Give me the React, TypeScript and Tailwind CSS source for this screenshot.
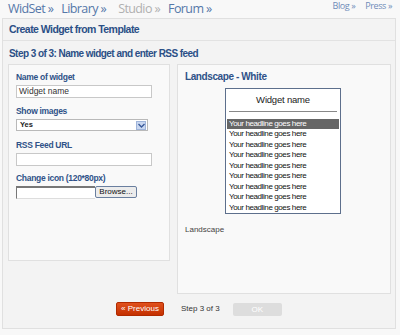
import React from "react";

const rows = Array.from({ length: 9 });

export default function App() {
  return (
    <div className="w-[400px] h-[335px] bg-[#f8f8f8] overflow-hidden" style={{ fontFamily: "'Liberation Sans', Arial, sans-serif" }}>
      {/* top nav */}
      <div className="h-[17px] flex items-end pl-[8px] pr-[8px] text-[12.5px] leading-[16px] tracking-[-0.6px]" style={{ fontFamily: "'Open Sans', sans-serif" }}>
        <span className="text-[#5577a8] mr-[8px]">WidSet »</span>
        <span className="text-[#5577a8] mr-[12px]">Library »</span>
        <span className="text-[#b0b0b0] mr-[8px]">Studio »</span>
        <span className="text-[#5577a8]">Forum »</span>
        <div className="flex-1" />
        <span className="text-[9px] text-[#6f8cb8] mb-[3px] mr-[10px] tracking-[-0.4px]">Blog »</span>
        <span className="text-[9px] text-[#6f8cb8] mb-[3px] tracking-[-0.4px]">Press »</span>
      </div>
      {/* main box */}
      <div className="ml-[2px] mt-[1px] w-[394px] h-[311px] border border-[#e0e0e0] bg-[#f3f3f3] flex flex-col">
        <div className="h-[22px] border-b border-[#e2e2e2] flex items-center pl-[6px] pt-[1px] text-[10.5px] font-bold text-[#2b4f86] tracking-[-0.55px]">
          Create Widget from Template
        </div>
        <div className="h-[23px] flex items-center pl-[6px] pt-[1px] text-[10px] font-bold text-[#2b4f86] tracking-[-0.55px]">
          Step 3 of 3: Name widget and enter RSS feed
        </div>
        <div className="flex items-start gap-[7px] pl-[5px]">
          {/* left panel */}
          <div className="w-[162px] h-[197px] border border-[#e0e0e0] bg-[#f9f9f9] pl-[7px] pt-[6px] text-[9px]">
            <div className="font-bold text-[#2f5288] h-[13px] leading-[13px] text-[8.5px] tracking-[-0.3px]">Name of widget</div>
            <div className="mt-[1px] w-[136px] h-[13px] border border-[#c8c8c8] bg-white text-[8.5px] leading-[11px] pl-[2px] text-[#333]">Widget name</div>
            <div className="mt-[7px] font-bold text-[#2f5288] h-[13px] leading-[13px] text-[8.5px] tracking-[-0.3px]">Show images</div>
            <div className="mt-[1px] w-[132px] h-[12px] border border-[#b9b9b9] bg-white flex items-center text-[8px] text-[#222]">
              <span className="pl-[3px] flex-1 leading-[10px] font-bold text-[7.5px]">Yes</span>
              <span className="w-[10px] h-[9px] mr-[1px] bg-[#c9d7f0] border border-[#9fb4da] flex items-center justify-center">
                <svg width="7" height="5" viewBox="0 0 7 5"><path d="M0.5 1 L3.5 4 L6.5 1" stroke="#3a5a9a" strokeWidth="1.4" fill="none" /></svg>
              </span>
            </div>
            <div className="mt-[8px] font-bold text-[#2f5288] h-[13px] leading-[13px] text-[8.5px] tracking-[-0.3px]">RSS Feed URL</div>
            <div className="mt-[1px] w-[136px] h-[13px] border border-[#c8c8c8] bg-white" />
            <div className="mt-[6px] font-bold text-[#2f5288] h-[13px] leading-[13px] text-[8.5px] tracking-[-0.3px]">Change icon (120*80px)</div>
            <div className="mt-[1px] flex items-start">
              <div className="w-[79px] h-[13px] border-t-2 border-l border-[#777] border-r-0 border-b border-b-[#ddd] bg-white" />
              <div className="w-[42px] h-[12px] border border-[#6a7f9f] rounded-[2px] bg-[#ececec] text-[8px] leading-[10px] text-center text-[#111]">Browse...</div>
            </div>
          </div>
          {/* right panel */}
          <div className="w-[214px] h-[230px] border border-[#e0e0e0] bg-[#f9f9f9] pl-[7px] pt-[5px]">
            <div className="text-[10px] font-bold text-[#2f5288] h-[14px] leading-[14px] tracking-[-0.4px]">Landscape - White</div>
            <div className="ml-[40px] mt-[4px] w-[116px] h-[126px] border border-[#5d6f8c] bg-white overflow-hidden flex flex-col">
              <div className="h-[23px] flex items-center justify-center text-[9.5px] text-[#222] tracking-[-0.2px]">Widget name</div>
              <div className="mx-[3px] h-[1px] bg-[#888]" />
              <div className="mt-[7px] px-[1px]">
                {rows.map((_, i) => (
                  <div
                    key={i}
                    className={
                      i === 0
                        ? "h-[10.5px] leading-[10px] text-[8px] bg-[#666] text-white pl-[2px] tracking-[-0.4px]"
                        : "h-[10.5px] leading-[10px] text-[8px] text-[#111] pl-[2px] tracking-[-0.4px]"
                    }
                  >
                    Your headline goes here
                  </div>
                ))}
              </div>
            </div>
            <div className="mt-[10px] text-[8px] text-[#444]">Landscape</div>
          </div>
        </div>
        <div className="flex items-center mt-[8px] pl-[113px]">
          <div className="w-[48px] h-[14px] rounded-[2px] bg-gradient-to-b from-[#e0501c] to-[#c43000] border border-[#b02a00] text-white text-[8px] leading-[12px] text-center">« Previous</div>
          <div className="ml-[17px] text-[8px] text-[#333]">Step 3 of 3</div>
          <div className="ml-[13px] w-[49px] h-[13px] rounded-[2px] bg-[#dddddd] text-white text-[8px] leading-[13px] text-center">OK</div>
        </div>
      </div>
    </div>
  );
}
